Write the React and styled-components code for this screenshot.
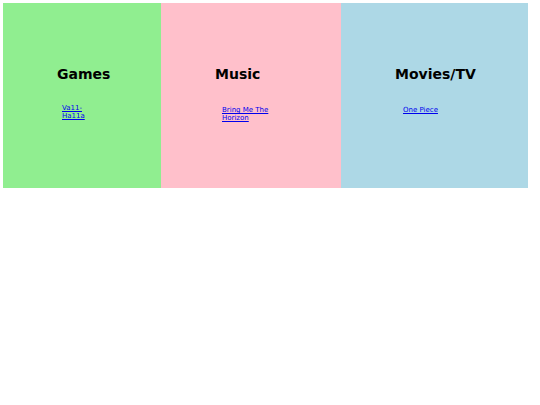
import { createGlobalStyle, styled } from "styled-components";

const GlobalStyle = createGlobalStyle`
  body {
    margin: 0;
    font-family: "DejaVu Sans", Verdana, sans-serif;
    background: #fff;
  }
`;

const categories = [
  { title: "Games", bg: "#90ee90", width: 158, listWidth: 30, indent: 5, gap: 22, links: ["Va11-Ha11a"] },
  { title: "Music", bg: "#ffc0cb", width: 180, listWidth: 52, indent: 7, gap: 24, links: ["Bring Me The Horizon"] },
  { title: "Movies/TV", bg: "#add8e6", width: 187, listWidth: 60, indent: 8, gap: 24, links: ["One Piece"] },
];

const Row = styled.div`
  display: flex;
  padding: 3px;
`;

const Panel = styled.section`
  box-sizing: border-box;
  width: ${(p) => p.$width}px;
  height: 185px;
  padding: 63px 0 0 54px;
  background: ${(p) => p.$bg};
`;

const Heading = styled.h2`
  margin: 0;
  font-size: 14px;
  font-weight: bold;
  line-height: 16px;
  color: #000;
`;

const LinkList = styled.ul`
  list-style: none;
  margin: ${(p) => p.$gap}px 0 0 ${(p) => p.$indent}px;
  padding: 0;
  width: ${(p) => p.$width}px;
  font-size: 7px;
  line-height: 8px;
`;

const Link = styled.a`
  color: #0000ee;
  text-decoration: underline;
`;

export default function App() {
  return (
    <>
      <GlobalStyle />
      <Row>
        {categories.map((c) => (
          <Panel key={c.title} $bg={c.bg} $width={c.width}>
            <Heading>{c.title}</Heading>
            <LinkList $width={c.listWidth} $indent={c.indent} $gap={c.gap}>
              {c.links.map((l) => (
                <li key={l}>
                  <Link href="#">{l}</Link>
                </li>
              ))}
            </LinkList>
          </Panel>
        ))}
      </Row>
    </>
  );
}
